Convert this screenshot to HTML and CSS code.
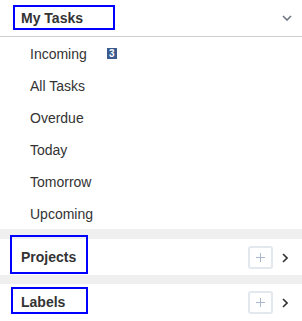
FILE: index.html
```html
<!DOCTYPE html>
<html>
<head>
<meta charset="utf-8">
<link rel="stylesheet" href="styles.css">
</head>
<body>
<div class="panel">
  <div class="head">
    <div class="head-title">My Tasks</div>
    <svg class="caret" width="10" height="6" viewBox="0 0 10 6"><path d="M1 1 L5 5 L9 1" fill="none" stroke="#6f7583" stroke-width="1.6"/></svg>
  </div>
  <ul class="list">
    <li class="item">Incoming <span class="badge">3</span></li>
    <li class="item">All Tasks</li>
    <li class="item">Overdue</li>
    <li class="item">Today</li>
    <li class="item">Tomorrow</li>
    <li class="item">Upcoming</li>
  </ul>
  <div class="band"></div>
  <div class="section">
    <div class="sec-title sec-projects">Projects</div>
    <div class="sec-actions">
      <span class="add"><svg width="9" height="9" viewBox="0 0 9 9"><path d="M4.5 0 V9 M0 4.5 H9" stroke="#a9b8cc" stroke-width="1"/></svg></span>
      <svg class="more" width="6" height="10" viewBox="0 0 6 10"><path d="M1 1 L5 5 L1 9" fill="none" stroke="#333" stroke-width="1.6"/></svg>
    </div>
  </div>
  <div class="band band2"></div>
  <div class="section">
    <div class="sec-title sec-labels">Labels</div>
    <div class="sec-actions">
      <span class="add"><svg width="9" height="9" viewBox="0 0 9 9"><path d="M4.5 0 V9 M0 4.5 H9" stroke="#a9b8cc" stroke-width="1"/></svg></span>
      <svg class="more" width="6" height="10" viewBox="0 0 6 10"><path d="M1 1 L5 5 L1 9" fill="none" stroke="#333" stroke-width="1.6"/></svg>
    </div>
  </div>
</div>
</body>
</html>
```
FILE: styles.css
```css
html, body {
  margin: 0;
  padding: 0;
  background: #fff;
  overflow: hidden;
}
body {
  font-family: "Liberation Sans", Arial, sans-serif;
  color: #333;
  font-size: 14px;
}
.panel {
  width: 302px;
}
.head {
  height: 36px;
  border-bottom: 1px solid #cfcfcf;
  display: flex;
  align-items: flex-start;
  justify-content: space-between;
}
.head-title {
  margin: 7px 0 0 15px;
  width: 98px;
  height: 21px;
  box-sizing: border-box;
  padding: 3px 0 2px 6px;
  line-height: 16px;
  font-weight: bold;
  outline: 2px solid #0000ff;
}
.caret {
  margin: 15px 10px 0 0;
}
.list {
  list-style: none;
  margin: 0;
  padding: 0;
}
.item {
  height: 32px;
  box-sizing: border-box;
  line-height: 28px;
  padding: 3px 0 1px 30px;
  display: flex;
  align-items: center;
}
.badge {
  display: inline-block;
  width: 10px;
  height: 11px;
  margin-left: 20px;
  margin-top: -1px;
  background: #3b5a8d;
  color: #fff;
  font-size: 10px;
  font-weight: bold;
  line-height: 11px;
  text-align: center;
}
.band {
  height: 10px;
  background: #efefef;
}
.band2 {
  height: 9px;
}
.section {
  height: 36px;
  display: flex;
  align-items: flex-start;
  justify-content: space-between;
}
.sec-title {
  box-sizing: border-box;
  font-weight: bold;
  line-height: 16px;
  outline: 2px solid #0000ff;
  position: relative;
}
.sec-projects {
  margin: -2px 0 0 12px;
  width: 74px;
  height: 35px;
  padding: 12px 0 0 9px;
}
.sec-labels {
  margin: 5px 0 0 13px;
  width: 73px;
  height: 23px;
  padding: 5px 0 0 8px;
}
.sec-actions {
  display: flex;
  align-items: center;
  margin-top: 7px;
  margin-right: 14px;
}
.add {
  width: 25px;
  height: 23px;
  box-sizing: border-box;
  border: 2px solid #e3e8ee;
  border-radius: 3px;
  display: flex;
  align-items: center;
  justify-content: center;
}
.more {
  margin-left: 9px;
}
```
